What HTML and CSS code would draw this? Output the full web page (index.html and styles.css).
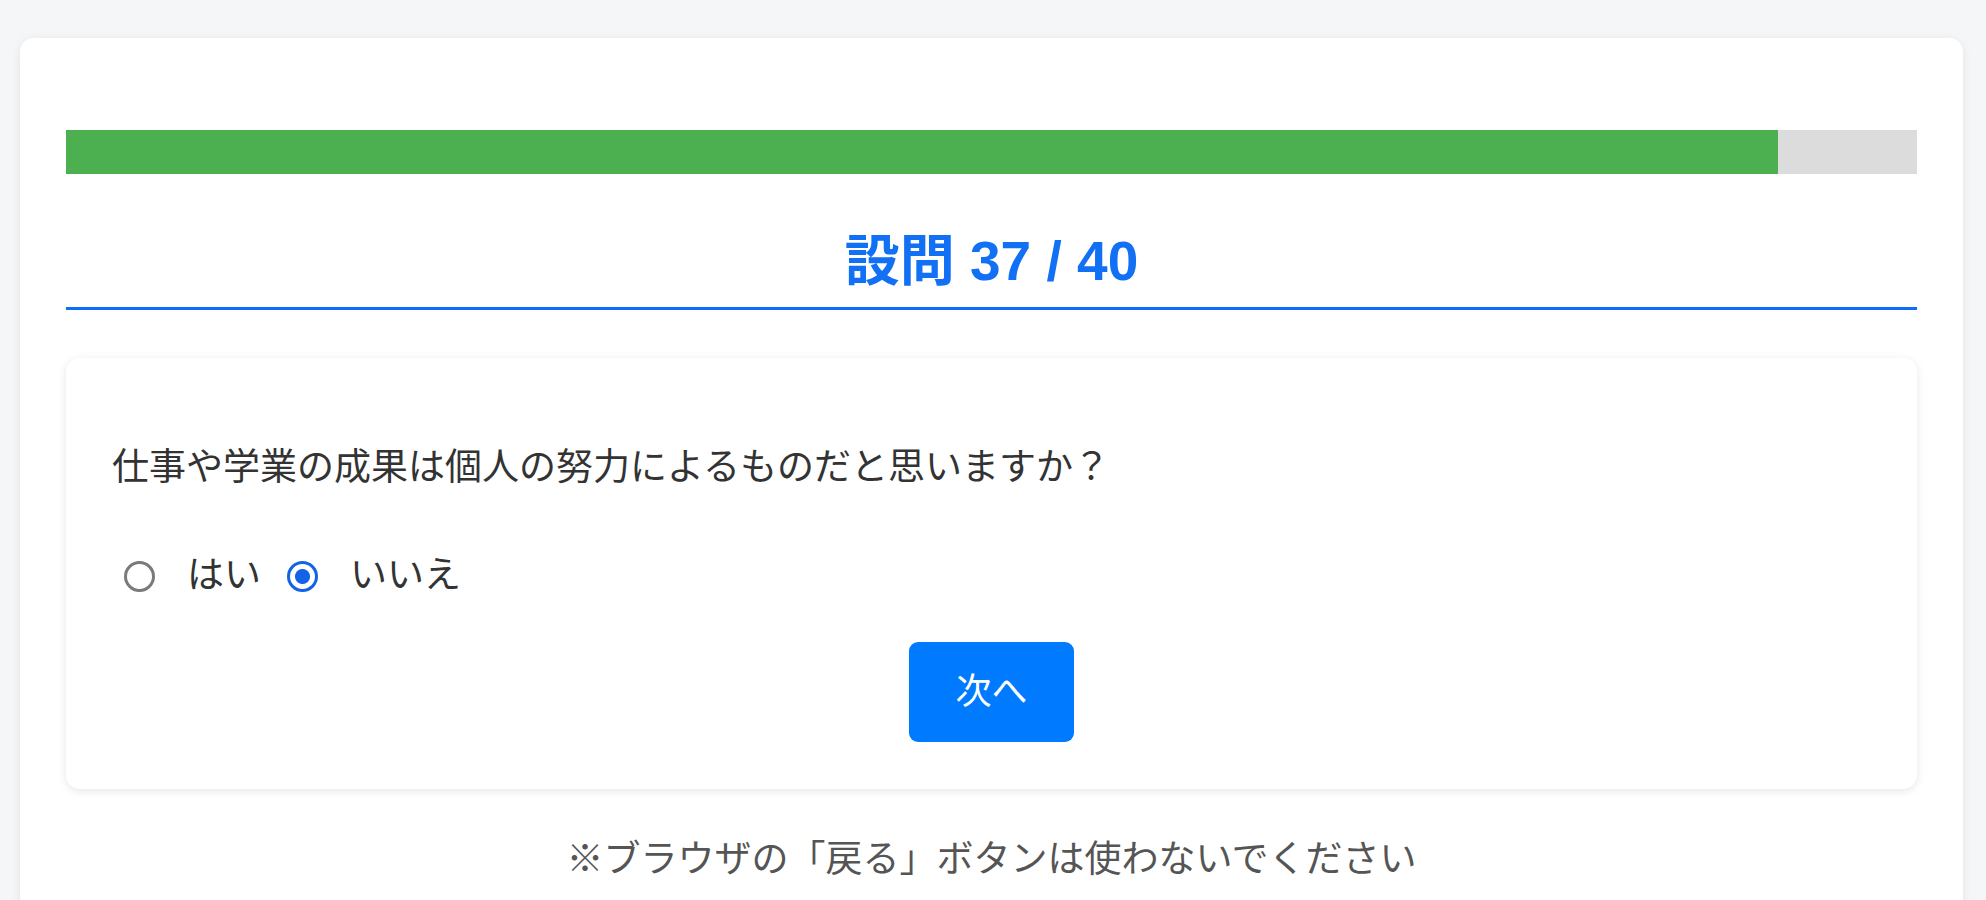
FILE: index.html
```html
<!doctype html>
<html lang="ja">
<head>
  <meta charset="UTF-8">
  <title>設問 37 / 40</title>
  <link rel="stylesheet" href="styles.css">
</head>
<body>
  <main class="quiz">
    <div class="progress"><div class="progress-fill" style="width: 92.5%"></div></div>
    <h2 class="quiz-title">設問 37 / 40</h2>
    <form class="question">
      <p class="question-text">仕事や学業の成果は個人の努力によるものだと思いますか？</p>
      <div class="choices">
        <label class="choice"><input type="radio" name="answer" value="yes"><span>はい</span></label>
        <label class="choice"><input type="radio" name="answer" value="no" checked><span>いいえ</span></label>
      </div>
      <div class="actions">
        <button type="button" class="next">次へ</button>
      </div>
    </form>
    <p class="notice">※ブラウザの「戻る」ボタンは使わないでください</p>
  </main>
</body>
</html>
```

FILE: styles.css
```css
body {
  margin: 0;
  padding: 38px 23px 0 20px;
  background: #f4f6f8;
  color: #333;
  font-family: "Liberation Sans", "Noto Sans CJK JP", sans-serif;
  font-size: 37px;
  line-height: 44px;
}
.quiz {
  background: #fff;
  border-radius: 14px;
  box-shadow: 0 2px 10px rgba(0, 0, 0, .08);
  padding: 92px 46px 20px;
  min-height: 900px;
}
.progress {
  height: 44px;
  background: #dcdcdc;
  margin-bottom: 57px;
}
.progress-fill {
  height: 100%;
  background: #4caf50;
}
.quiz-title {
  margin: 0;
  font-size: 55px;
  line-height: 61px;
  font-weight: bold;
  color: #1170f4;
  text-align: center;
  padding-bottom: 15px;
  border-bottom: 3px solid #0d6efd;
}
.question {
  margin-top: 48px;
  background: #fff;
  border-radius: 14px;
  box-shadow: 0 2px 9px rgba(0, 0, 0, .1);
  padding: 46px 46px 47px;
}
.question-text { margin: 42px 0 0 }
.choices {
  display: flex;
  align-items: center;
  margin-top: 64px;
}
.choice {
  display: flex;
  align-items: center;
}
.choice input {
  appearance: none;
  box-sizing: border-box;
  width: 31px;
  height: 31px;
  border: 3px solid #7a7a7a;
  border-radius: 50%;
  background: #fff;
  margin: 0 32px 0 12px;
}
.choice input:checked {
  border-color: #1463e6;
  background: radial-gradient(circle, #1463e6 0 7px, #fff 8px);
}
.choice + .choice input { margin-left: 26px }
.actions {
  display: flex;
  justify-content: center;
  margin-top: 44px;
}
.next {
  font: inherit;
  font-size: 36px;
  color: #fff;
  background: #007bff;
  border: 0;
  border-radius: 9px;
  padding: 28px 46px;
}
.notice {
  margin: 49px 0 0;
  text-align: center;
  color: #555;
}
```
